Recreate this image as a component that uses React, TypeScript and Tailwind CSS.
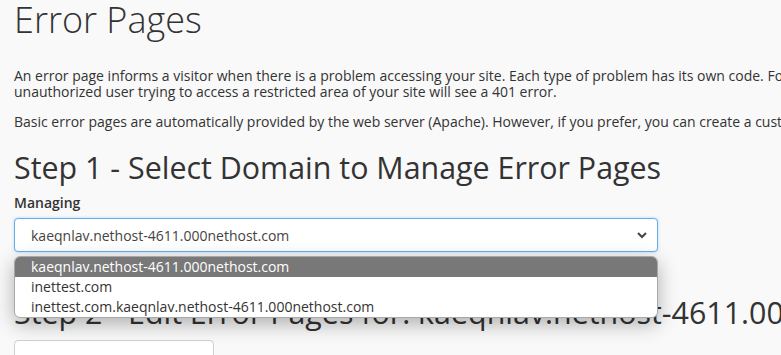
import React from "react";

const domains = [
  "kaeqnlav.nethost-4611.000nethost.com",
  "inettest.com",
  "inettest.com.kaeqnlav.nethost-4611.000nethost.com",
];

const App = () => {
  return (
    <div className="w-full h-[355px] overflow-hidden bg-[#f9f9f9] text-[#333] font-['Open_Sans',sans-serif]">
      <div className="w-[928px] px-[14px]">
        <h1 className="pt-[2px] text-[36px] leading-[36px] font-light">Error Pages</h1>
        <p className="mt-[30px] text-[14px] leading-[16px]">
          An error page informs a visitor when there is a problem accessing your site. Each type of problem has its own
          code. For example, an unauthorized user trying to access a restricted area of your site will see a 401 error.
        </p>
        <p className="mt-[14px] text-[14px] leading-[16px] whitespace-nowrap">
          Basic error pages are automatically provided by the web server (Apache). However, if you prefer, you can create a
          custom error page for any valid HTTP status code.
        </p>
        <h2 className="mt-[21px] text-[30.4px] leading-[33px] whitespace-nowrap">
          Step 1 - Select Domain to Manage Error Pages
        </h2>
        <label className="block mt-[9px] text-[14px] leading-[20px] font-semibold">Managing</label>
        <div className="relative mt-[5px] w-[644px]">
          <div className="h-[34px] flex items-center justify-between pl-[16px] pr-[8px] bg-white border border-[#66afe9] rounded-[4px] shadow-[0_0_3px_rgba(102,175,233,0.5)] text-[14px] text-[#444]">
            <span>{domains[0]}</span>
            <svg width="12" height="8" viewBox="0 0 12 8" className="mr-[1px]">
              <path d="M2 2 L6 6 L10 2" fill="none" stroke="#444" strokeWidth="2" />
            </svg>
          </div>
          <div className="absolute z-10 left-0 top-[38px] w-full bg-white border border-[#a8a8a8] rounded-[6px] overflow-hidden shadow-[0_6px_20px_rgba(0,0,0,0.3)] text-[14px]">
            {domains.map((d, i) => (
              <div
                key={d}
                className={
                  i === 0
                    ? "h-[20px] leading-[20px] pl-[16px] bg-[#787878] text-white"
                    : "h-[20px] leading-[20px] pl-[16px] text-[#333]"
                }
              >
                {d}
              </div>
            ))}
          </div>
        </div>
        <h2 className="mt-[44px] text-[30.4px] leading-[33px] whitespace-nowrap">
          Step 2 - Edit Error Pages for: kaeqnlav.nethost-4611.000nethost.com
        </h2>
        <div className="mt-[11px] w-[200px] h-[40px] bg-white border border-[#d0d0d0] rounded-t-[4px]" />
      </div>
    </div>
  );
};

export default App;
